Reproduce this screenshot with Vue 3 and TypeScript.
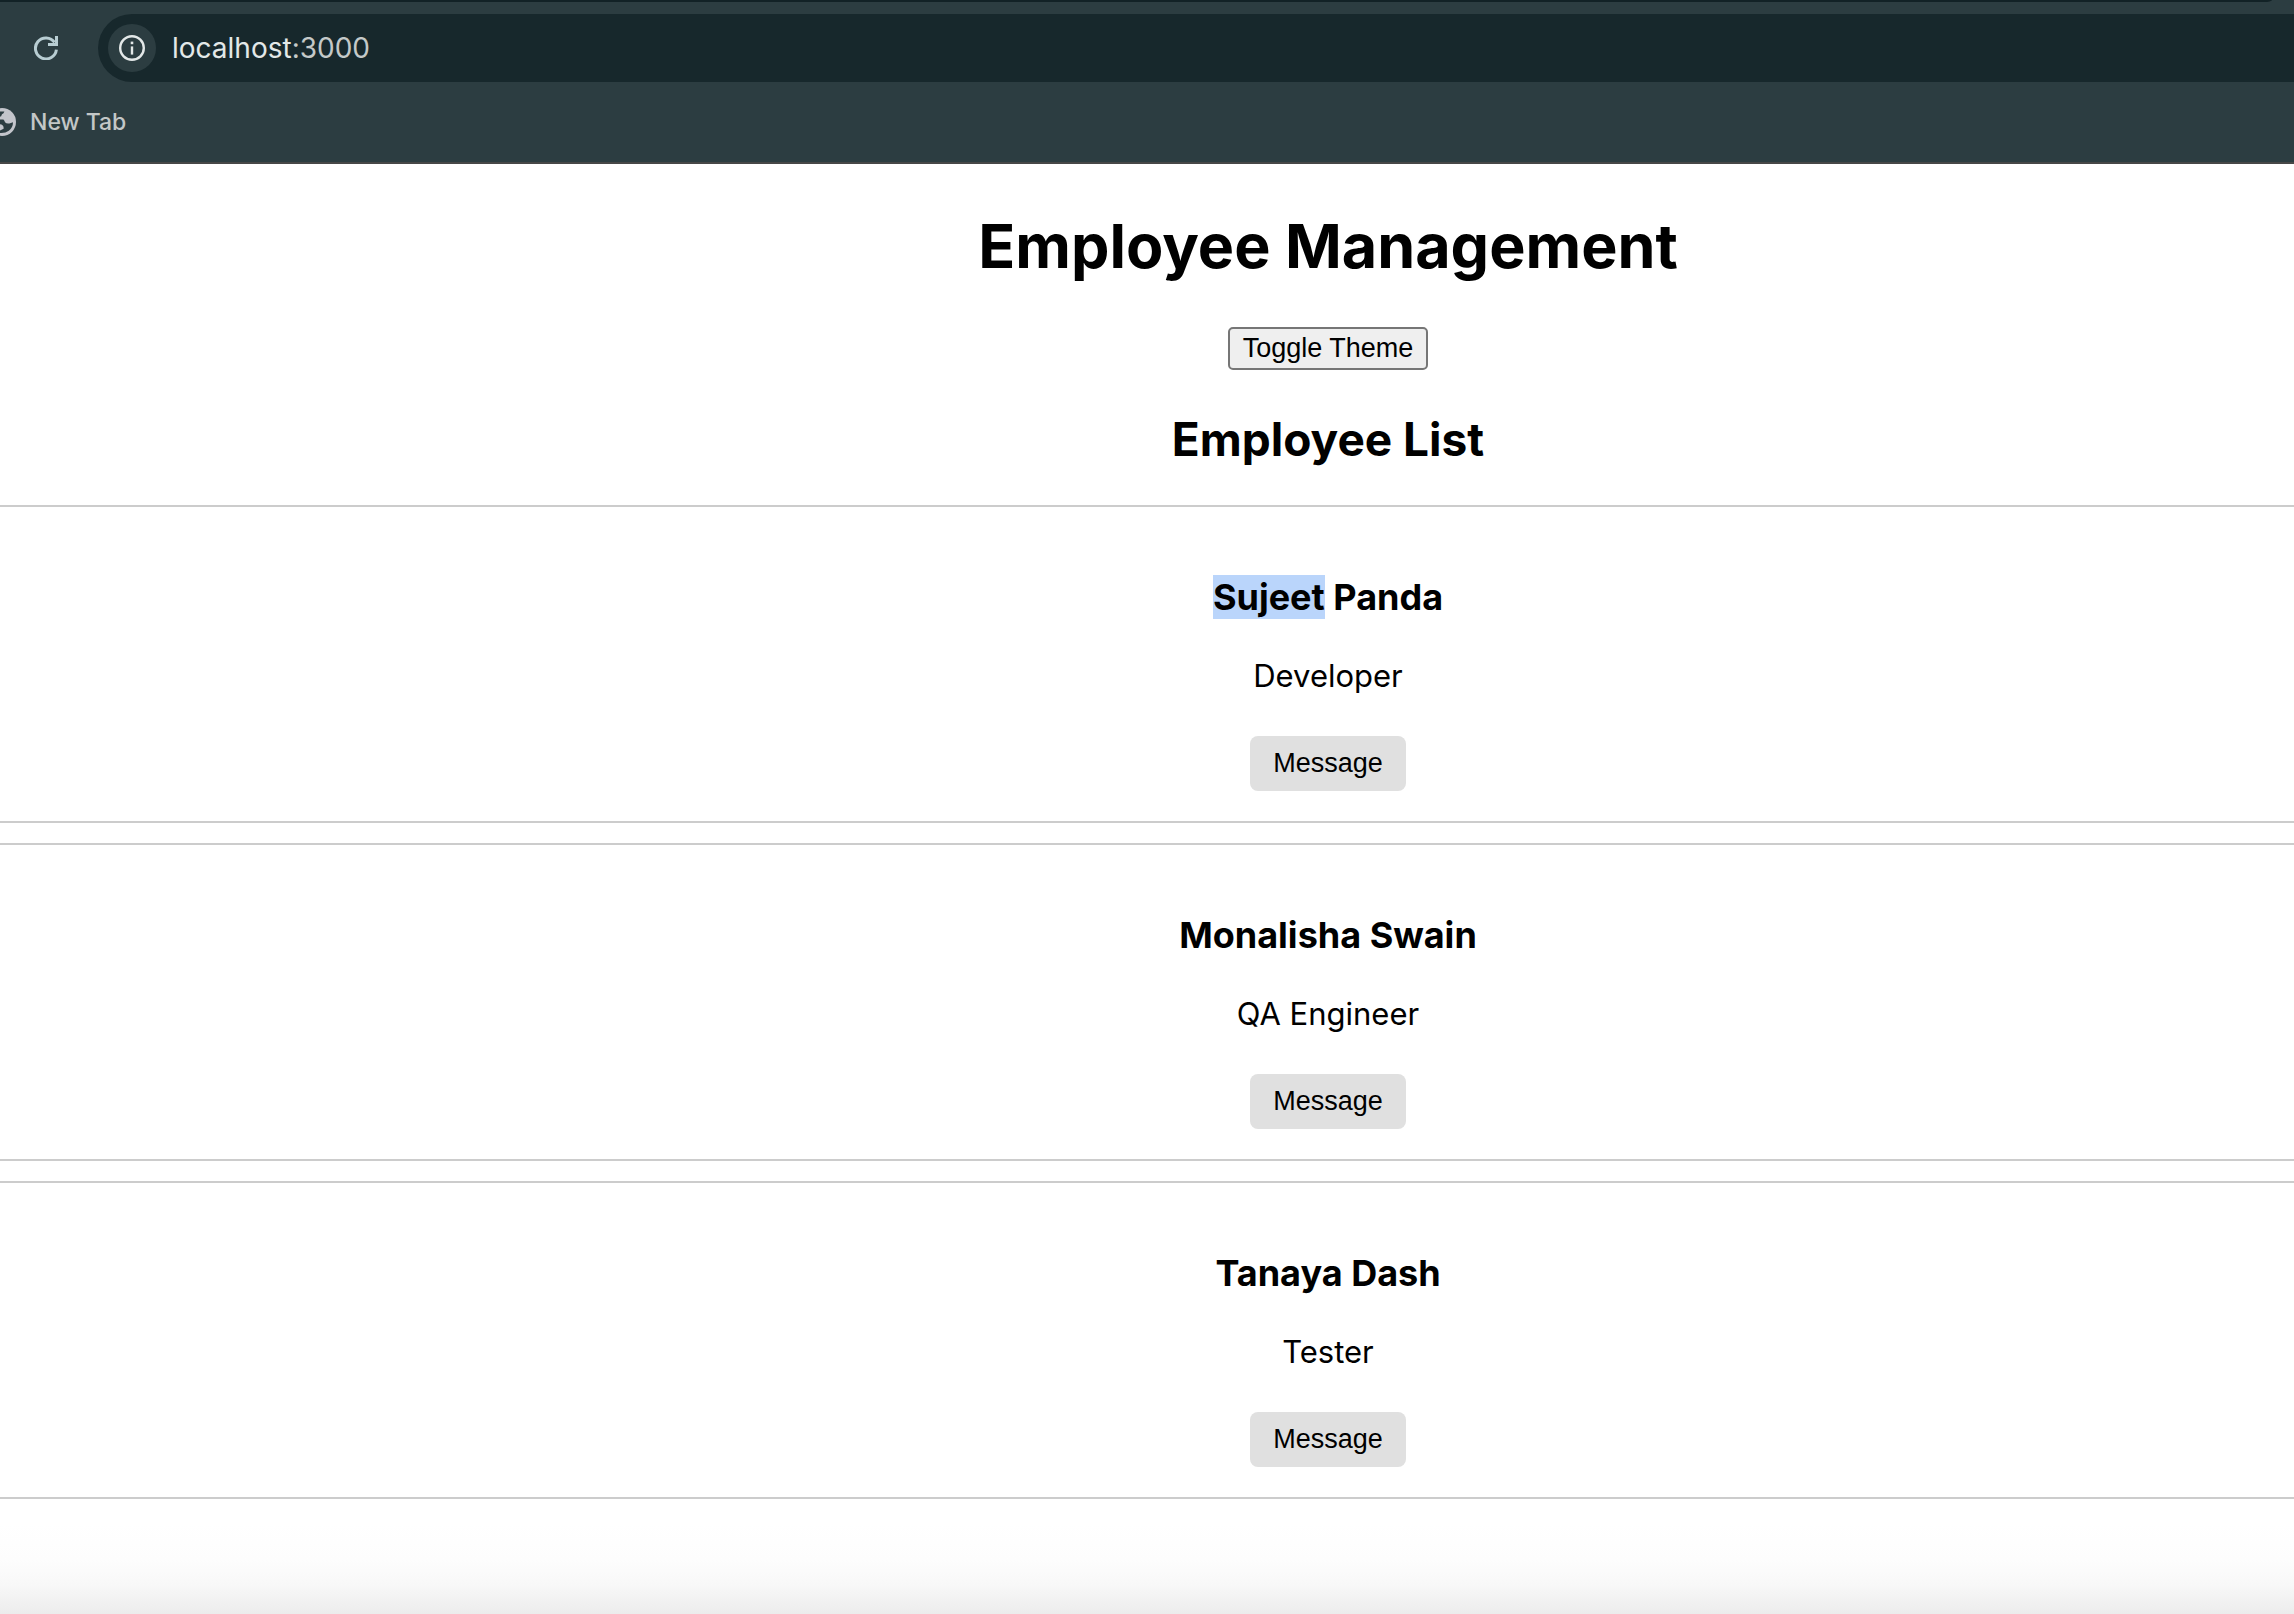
<script setup lang="ts">
interface Employee {
  id: number
  first: string
  last: string
  role: string
  highlighted?: boolean
}

const employees: Employee[] = [
  { id: 1, first: 'Sujeet', last: 'Panda', role: 'Developer', highlighted: true },
  { id: 2, first: 'Monalisha', last: 'Swain', role: 'QA Engineer' },
  { id: 3, first: 'Tanaya', last: 'Dash', role: 'Tester' },
]
</script>

<template>
  <div class="window">
    <header class="chrome">
      <div class="tab-strip"></div>
      <div class="toolbar">
        <button class="reload" type="button" aria-label="Reload">
          <svg viewBox="0 0 24 24" width="24" height="24" fill="none" stroke="currentColor" stroke-width="3">
            <path d="M20.6 6.4A10.5 10.5 0 1 0 22.4 13.6" />
            <path d="M22.5 0V8.5H14" />
          </svg>
        </button>
        <div class="omnibox">
          <button class="site-info" type="button" aria-label="View site information">
            <svg viewBox="0 0 26 26" width="26" height="26" fill="none" stroke="currentColor">
              <circle cx="13" cy="13" r="11.8" stroke-width="2.4" />
              <path d="M13 11.4V19.6" stroke-width="2.4" />
              <path d="M13 6.6V9.2" stroke-width="2.6" />
            </svg>
          </button>
          <span class="url">localhost<span class="port">:3000</span></span>
        </div>
      </div>
      <nav class="bookmarks">
        <a class="bookmark" href="#">
          <svg viewBox="12 0 16 28" width="16" height="28">
            <circle cx="14" cy="14" r="14" fill="#c3c5cb" />
            <path
              d="M12 3.4H16.4Q15.8 5.4 14 6.2L13 8.4H12ZM12 11.4H15.4Q16.6 12.4 17 14.2Q18.6 16 21.4 15.4L25 14.2Q25 19.4 20.8 22.8Q17.5 25.3 12 25V22.6L15.6 20.8V19.4Q15.2 16.4 12 16.2Z"
              fill="#2c3d41"
            />
          </svg>
          <span>New Tab</span>
        </a>
      </nav>
    </header>

    <main class="page">
      <h1>Employee Management</h1>
      <button class="toggle" type="button">Toggle Theme</button>
      <h2>Employee List</h2>
      <section class="list">
        <article v-for="employee in employees" :key="employee.id" class="card">
          <h3>
            <mark v-if="employee.highlighted">{{ employee.first }}</mark>
            <template v-else>{{ employee.first }}</template>
            {{ employee.last }}
          </h3>
          <p>{{ employee.role }}</p>
          <button class="message" type="button">Message</button>
        </article>
      </section>
    </main>
    <div class="shade"></div>
  </div>
</template>

<style>
body {
  background: #fff;
}
</style>

<style scoped>
.window {
  display: flex;
  flex-direction: column;
  min-height: 100vh;
  overflow: hidden;
  font-family: Inter, "Liberation Sans", sans-serif;
  color: #000;
}

.chrome {
  background: #2c3d41;
  border-bottom: 2px solid #474747;
}

.tab-strip {
  height: 2px;
  margin-right: 22px;
  background: #122226;
  border-bottom-right-radius: 8px 2px;
}

.toolbar {
  display: flex;
  align-items: center;
  gap: 40px;
  padding: 12px 0 0 34px;
}

.reload {
  display: flex;
  padding: 0;
  border: 0;
  background: none;
  color: #b8cdd2;
}

.omnibox {
  display: flex;
  flex: 1;
  align-items: center;
  gap: 16px;
  height: 68px;
  box-sizing: border-box;
  padding-left: 10px;
  border-radius: 34px 0 0 34px;
  background: #17282c;
}

.site-info {
  display: flex;
  align-items: center;
  justify-content: center;
  width: 48px;
  height: 48px;
  padding: 0;
  border: 0;
  border-radius: 50%;
  background: #2c3d41;
  color: #e3e8e8;
}

.url {
  font-size: 28px;
  line-height: 34px;
  color: #e3e8e8;
}

.port {
  color: #c4c9c8;
}

.bookmarks {
  display: flex;
  align-items: center;
  height: 80px;
}

.bookmark {
  display: flex;
  align-items: center;
  gap: 14px;
  font-size: 23px;
  line-height: 28px;
  font-weight: 500;
  color: #c3c7c7;
  text-decoration: none;
}

/* The page is wider than the window, so its centre line sits right of the middle. */
.page {
  display: flex;
  flex-direction: column;
  align-items: center;
  width: calc(100% + 362px);
  text-align: center;
}

h1 {
  margin: 44px 0 43px;
  font-size: 61px;
  line-height: 76px;
  font-weight: 700;
}

h2 {
  margin: 41px 0 38px;
  font-size: 46px;
  line-height: 56px;
  font-weight: 700;
}

h3 {
  margin: 38px 0;
  font-size: 36px;
  line-height: 44px;
  font-weight: 700;
}

p {
  margin: 0 0 42px;
  font-size: 31px;
  line-height: 37px;
}

mark {
  background: #bad5fb;
  color: inherit;
}

.toggle,
.message {
  font-family: "Liberation Sans", Arial, sans-serif;
  font-size: 27px;
  line-height: 31px;
  color: #000;
}

.toggle {
  padding: 4px 13px;
  border: 2px solid #767676;
  border-radius: 5px;
  background: #efefef;
}

.list {
  display: flex;
  flex-direction: column;
  gap: 20px;
  width: 100%;
}

.card {
  padding: 30px 0;
  border-top: 2px solid #ccc;
  border-bottom: 2px solid #ccc;
}

.message {
  display: block;
  margin: 0 auto;
  padding: 12px 23px;
  border: 0;
  border-radius: 8px;
  background: #e0e0e0;
}

.shade {
  height: 90px;
  margin-top: auto;
  background: linear-gradient(#fff, #fdfdfd 40%, #f8f8f8 68%, #ececec);
}
</style>
